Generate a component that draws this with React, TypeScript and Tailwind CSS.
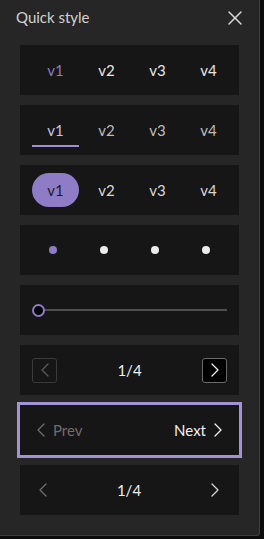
import { X } from 'lucide-react'

const items = ['v1', 'v2', 'v3', 'v4']

function Chevron({ dir, className = '' }: { dir: 'left' | 'right'; className?: string }) {
  return (
    <svg width="8" height="14" viewBox="0 0 8 14" fill="none" className={className}>
      <path
        d={dir === 'left' ? 'M7 1 1 7l6 6' : 'M1 1l6 6-6 6'}
        stroke="currentColor"
        strokeWidth="1.3"
        strokeLinecap="round"
        strokeLinejoin="round"
      />
    </svg>
  )
}

function Card({ children, className = '' }: { children: React.ReactNode; className?: string }) {
  return (
    <div className={`flex h-[50px] items-center bg-[#161616] pl-3 pr-[7px] ${className}`}>
      {children}
    </div>
  )
}

function Row({ children }: { children: React.ReactNode }) {
  return <div className="grid w-full grid-cols-4 gap-1">{children}</div>
}

export default function App() {
  return (
    <div className="h-[539px] w-[264px] bg-[#0c0c0c] font-['Lato',sans-serif]">
      <div className="flex h-[536px] w-[260px] flex-col rounded-br-[3px] border-r border-b border-[#3d3d3d] bg-[#262626]">
        <div className="flex h-[45px] items-start justify-between pl-4 pr-3 pt-[6px]">
          <span className="text-[15px] text-[#d2d2d2]">Quick style</span>
          <X className="h-6 w-6 text-[#d6d6d6]" strokeWidth={1.5} />
        </div>

        <div className="flex flex-col gap-[10px] pl-5 pr-5 text-[15px]">
          {/* plain text tabs */}
          <Card>
            <Row>
              {items.map((v, i) => (
                <span key={v} className={`text-center ${i === 0 ? 'text-[#8b7ac6]' : 'text-[#e6e6e6]'}`}>
                  {v}
                </span>
              ))}
            </Row>
          </Card>

          {/* underline tabs */}
          <Card>
            <Row>
              {items.map((v, i) => (
                <div key={v} className="relative flex h-[50px] items-center justify-center">
                  <span className={i === 0 ? 'text-[#c9c2e6]' : 'text-[#bdbdbd]'}>{v}</span>
                  {i === 0 && <div className="absolute bottom-[8px] left-0 right-0 h-[2px] bg-[#9d8cd6]" />}
                </div>
              ))}
            </Row>
          </Card>

          {/* pill tabs */}
          <Card>
            <Row>
              {items.map((v, i) => (
                <div
                  key={v}
                  className={`flex h-[34px] items-center justify-center rounded-full ${
                    i === 0 ? 'bg-[#8e7cc6] text-[#1e1e1e]' : 'text-[#d8d8d8]'
                  }`}
                >
                  {v}
                </div>
              ))}
            </Row>
          </Card>

          {/* dots */}
          <Card className="pl-[9px] pr-[10px]">
            <Row>
              {items.map((v, i) => (
                <div key={v} className="flex justify-center">
                  <span className={`h-2 w-2 rounded-full ${i === 0 ? 'bg-[#8e7cc6]' : 'bg-[#ececec]'}`} />
                </div>
              ))}
            </Row>
          </Card>

          {/* slider */}
          <Card>
            <div className="flex w-full items-center pr-[5px]">
              <span className="h-[13px] w-[13px] shrink-0 rounded-full border-2 border-[#8e7cc6] bg-black" />
              <div className="h-[2px] flex-1 bg-[#4e4e4e]" />
            </div>
          </Card>

          {/* bordered pager */}
          <Card>
            <div className="flex w-full items-center justify-between pr-[5px]">
              <span className="flex h-[25px] w-[25px] items-center justify-center rounded-[3px] border border-[#3a3a3a] text-[#5a5a5a]">
                <Chevron dir="left" />
              </span>
              <span className="text-[#f0f0f0]">1/4</span>
              <span className="flex h-[25px] w-[25px] items-center justify-center rounded-[3px] border border-[#6a6a6a] bg-black text-[#f0f0f0]">
                <Chevron dir="right" />
              </span>
            </div>
          </Card>

          {/* prev / next, focused */}
          <Card className="outline-[3px] outline-solid outline-[#a293d6]">
            <div className="flex w-full items-center justify-between pr-[10px] pl-[5px]">
              <span className="flex items-center gap-2 text-[#6e6e6e]">
                <Chevron dir="left" />
                Prev
              </span>
              <span className="flex items-center gap-2 text-[#f0f0f0]">
                Next
                <Chevron dir="right" />
              </span>
            </div>
          </Card>

          {/* plain pager */}
          <Card>
            <div className="flex w-full items-center justify-between pl-[7px] pr-[13px]">
              <Chevron dir="left" className="text-[#6e6e6e]" />
              <span className="text-[#f0f0f0]">1/4</span>
              <Chevron dir="right" className="text-[#d6d6d6]" />
            </div>
          </Card>
        </div>
      </div>
    </div>
  )
}
